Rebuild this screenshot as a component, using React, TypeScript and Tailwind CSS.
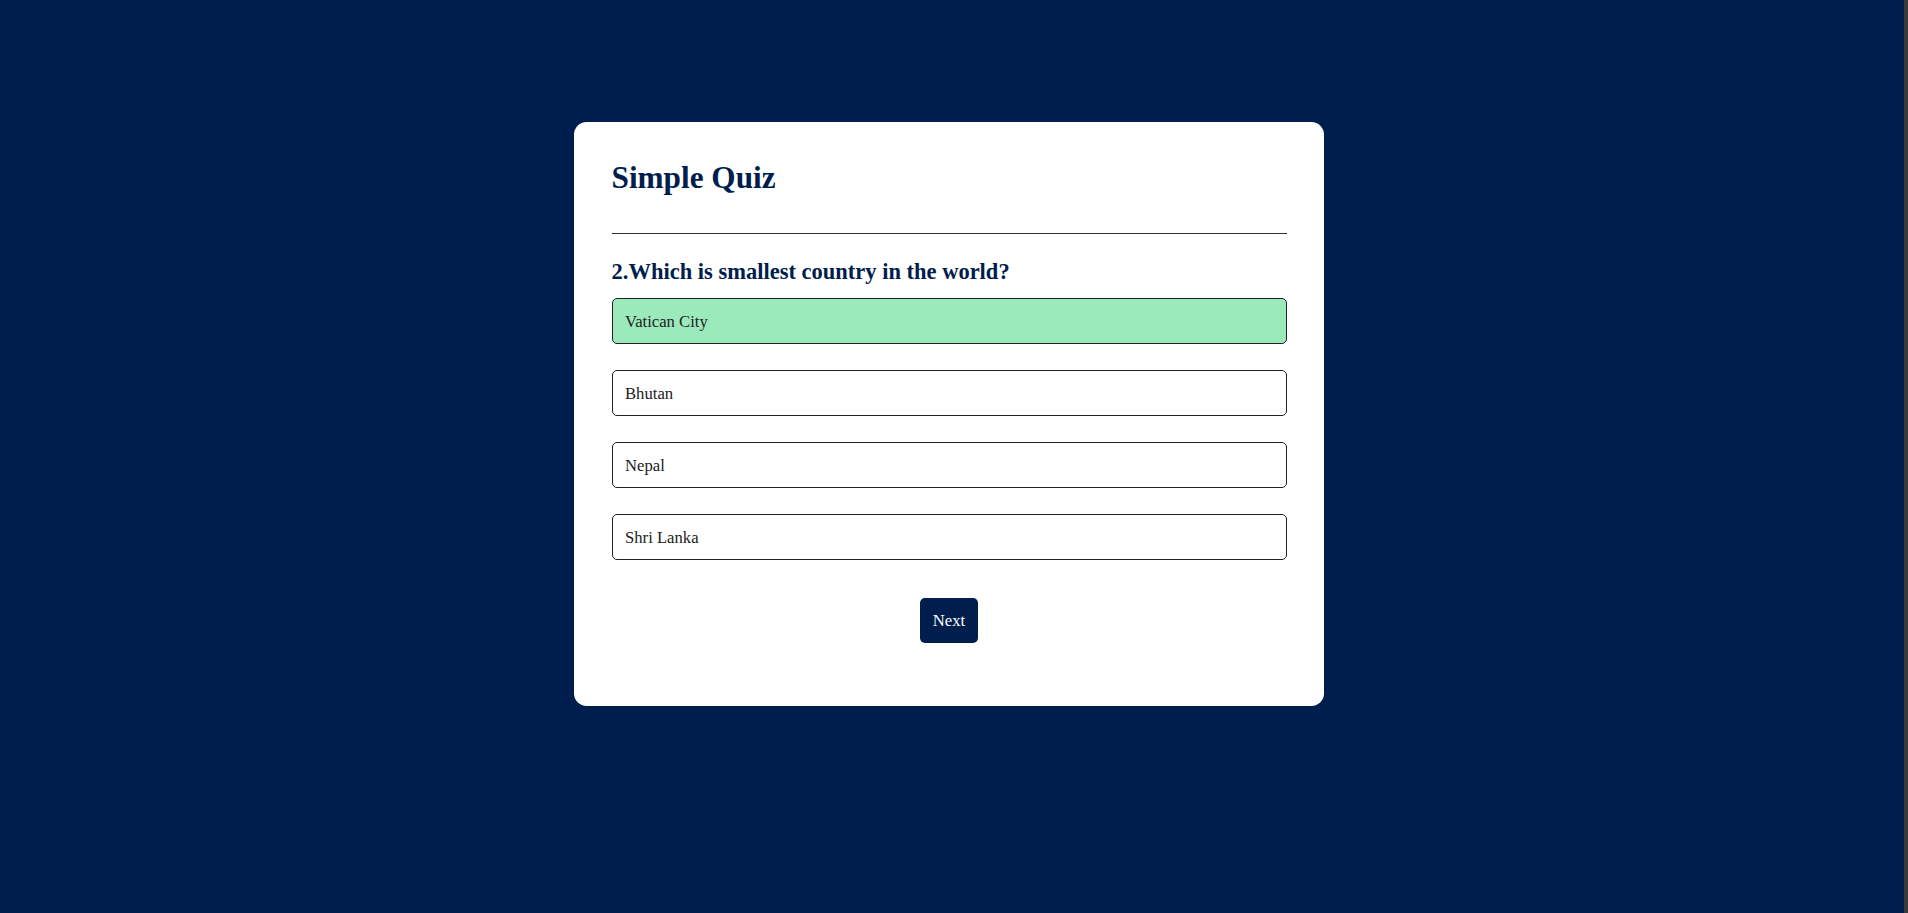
import { useState } from 'react';

const answers = [
  { text: 'Vatican City', correct: true },
  { text: 'Bhutan', correct: false },
  { text: 'Nepal', correct: false },
  { text: 'Shri Lanka', correct: false },
];

export default function App() {
  const [picked] = useState(0);

  return (
    <div className="flex h-[913px] overflow-hidden bg-[#001e4d] font-['Liberation_Serif',serif]">
      <div className="flex-1 pr-[6px]">
        <div className="mx-auto mt-[122px] w-[750px] rounded-[12.5px] bg-white px-[37.5px] pt-[37.5px] pb-[63px]">
          <h1 className="border-b border-[#333] pb-[37.5px] text-[31.25px] font-bold leading-[36px] text-[#001e4d]">
            Simple Quiz
          </h1>

          <div className="pt-[25px]">
            <h2 className="text-[22.5px] font-bold leading-[26px] text-[#001e4d]">
              2.Which is smallest country in the world?
            </h2>

            {/* answers */}
            <div className="flex flex-col gap-[26px] pt-[13px]">
              {answers.map((a, i) => (
                <button
                  key={a.text}
                  type="button"
                  className={
                    i === picked && a.correct
                      ? 'block h-[46px] w-full rounded-[5px] border border-[#222] bg-[#9aeabc] px-[12.5px] text-left text-[16.67px] leading-[19px] text-[#222]'
                      : 'block h-[46px] w-full rounded-[5px] border border-[#222] bg-white px-[12.5px] text-left text-[16.67px] leading-[19px] text-[#222]'
                  }
                >
                  {a.text}
                </button>
              ))}
            </div>
          </div>

          <div className="flex justify-center pt-[37.5px]">
            <button
              type="button"
              className="h-[45px] rounded-[5px] bg-[#001e4d] px-[12.5px] text-[16.67px] leading-[19px] text-white"
            >
              Next
            </button>
          </div>
        </div>
      </div>
      <div className="w-[4px] bg-[#3a3a3a]" />
    </div>
  );
}
